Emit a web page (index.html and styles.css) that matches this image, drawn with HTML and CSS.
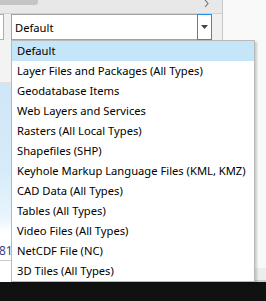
FILE: index.html
```html
<!DOCTYPE html>
<html lang="en">
<head>
  <meta charset="UTF-8">
  <meta name="viewport" content="width=device-width, initial-scale=1.0">
  <title>Add Data filter</title>
  <link rel="stylesheet" href="styles.css">
</head>
<body>
  <div class="screen">
    <div class="dialog">
      <div class="topbar">
        <div class="thumb"></div>
        <svg class="chevron" width="5" height="8" viewBox="0 0 5 8"><path d="M1 0l3 3.5L1 7" fill="none" stroke="#707070" stroke-width="1.1"/></svg>
      </div>
      <div class="filter-row">
        <div class="name-box"></div>
        <div class="combo">
          <span class="combo-text">Default</span>
          <div class="combo-btn">
            <svg width="7" height="4" viewBox="0 0 7 4"><path d="M0 0h7L3.5 4z" fill="#444"/></svg>
          </div>
        </div>
      </div>
      <div class="content">
        <div class="preview">
          <div class="preview-head"></div>
          <div class="map"></div>
          <div class="count">81</div>
        </div>
      </div>
    </div>
    <div class="side">
      <div class="side-fill"></div>
      <div class="side-band"></div>
    </div>

    <ul class="dropdown">
      <li class="selected">Default</li>
      <li>Layer Files and Packages (All Types)</li>
      <li>Geodatabase Items</li>
      <li>Web Layers and Services</li>
      <li>Rasters (All Local Types)</li>
      <li>Shapefiles (SHP)</li>
      <li>Keyhole Markup Language Files (KML, KMZ)</li>
      <li>CAD Data (All Types)</li>
      <li>Tables (All Types)</li>
      <li>Video Files (All Types)</li>
      <li>NetCDF File (NC)</li>
      <li>3D Tiles (All Types)</li>
    </ul>
  </div>
  <div class="taskbar"></div>
</body>
</html>
```

FILE: styles.css
```css
* {
  margin: 0;
  padding: 0;
  box-sizing: border-box;
}

body {
  font-family: 'Noto Sans', 'Open Sans', sans-serif;
  font-size: 11.2px;
  color: #000;
  background: #111;
  width: 266px;
  height: 301px;
  overflow: hidden;
}

.screen {
  position: relative;
  display: flex;
  height: 282px;
}

.dialog {
  width: 223px;
  display: flex;
  flex-direction: column;
  background: #f0f0f0;
  border-right: 1px solid #c9c9c9;
}

.topbar {
  height: 14px;
  display: flex;
  justify-content: space-between;
  align-items: flex-start;
  background: #e8e8e8;
  border-bottom: 1px solid #d2d2d2;
}

.thumb {
  width: 38px;
  height: 5px;
  background: #c4c4c4;
  border-radius: 0 0 3px 0;
}

.chevron {
  display: block;
  margin-right: 13px;
}

.filter-row {
  height: 26px;
  display: flex;
  justify-content: space-between;
}

.name-box {
  width: 4px;
  height: 26px;
  background: #fff;
  border: 1px solid #adadad;
  border-left: none;
}

.combo {
  width: 201px;
  height: 26px;
  margin-right: 10px;
  display: flex;
  align-items: center;
  justify-content: space-between;
  background: #fff;
  border: 1px solid #a2a2a2;
  border-right: none;
}

.combo-text {
  padding-left: 3px;
  padding-top: 1px;
}

.combo-btn {
  width: 15px;
  height: 26px;
  display: flex;
  align-items: center;
  justify-content: center;
  background: #fff;
  border: 1px solid #1e90e6;
}

.content {
  flex: 1;
  display: flex;
}

.preview {
  width: 11px;
  display: flex;
  flex-direction: column;
  background: #fff;
}

.preview-head {
  height: 43px;
  background: #f3f3f3;
  border-bottom: 1px solid #e2e2e2;
}

.map {
  height: 149px;
  background: linear-gradient(180deg, #cfe6f7 0%, #d7ecfa 60%, #e9f4fb 90%, #fff 100%);
}

.count {
  margin-top: 9px;
  height: 20px;
  font-size: 12px;
  line-height: 20px;
  color: #3b3f8f;
  margin-left: -1px;
  border-bottom: 1px solid #c9c9c9;
}

.side {
  flex: 1;
  display: flex;
  flex-direction: column;
  background: #f9f9f9;
}

.side-fill {
  flex: 1;
}

.side-band {
  height: 14px;
  background: #ededed;
  border-bottom: 2px solid #cfcfcf;
}

.dropdown {
  position: absolute;
  left: 11px;
  top: 40px;
  width: 244px;
  height: 242px;
  list-style: none;
  background: #fff;
  border: 1px solid #b9b9b9;
  box-shadow: 2px 2px 2px rgba(0, 0, 0, 0.18);
}

.dropdown li {
  height: 20px;
  line-height: 20px;
  padding-left: 5px;
  white-space: nowrap;
}

.dropdown .selected {
  background: #c5e5f8;
}

.taskbar {
  height: 19px;
  background: #111;
}
```
